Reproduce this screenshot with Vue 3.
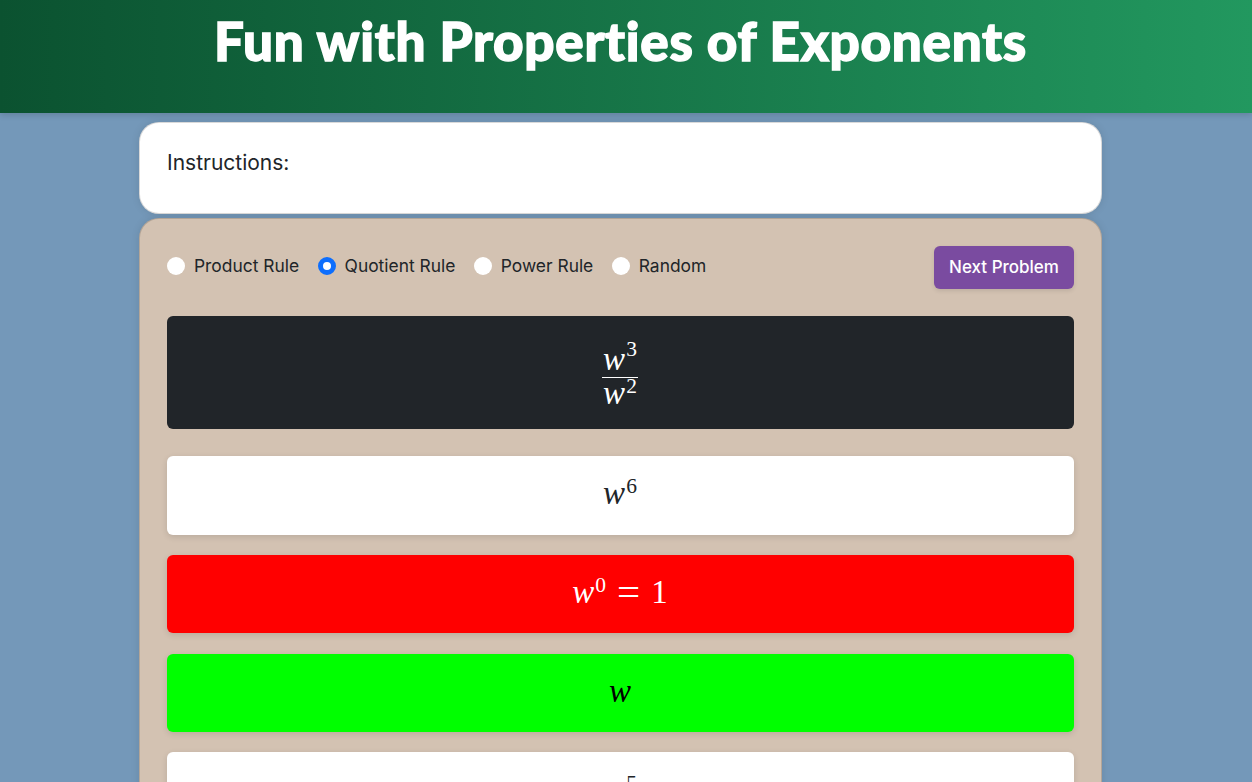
<script setup>
const rules = [
  { name: 'Product Rule', checked: false },
  { name: 'Quotient Rule', checked: true },
  { name: 'Power Rule', checked: false },
  { name: 'Random', checked: false },
]
</script>

<template>
  <div class="page">
    <header class="hero">
      <h1>Fun with Properties of Exponents</h1>
    </header>
    <main class="wrap">
      <section class="card instructions">Instructions:</section>
      <section class="card game">
        <div class="controls">
          <div class="radios">
            <label v-for="r in rules" :key="r.name" class="radio">
              <span class="dot" :class="{ on: r.checked }"></span>
              <span>{{ r.name }}</span>
            </label>
          </div>
          <button class="next">Next Problem</button>
        </div>

        <div class="problem">
          <span class="frac">
            <span class="num"><i>w</i><sup class="high">3</sup></span>
            <span class="den"><i>w</i><sup>2</sup></span>
          </span>
        </div>

        <div class="answer white first"><span class="math"><i>w</i><sup>6</sup></span></div>
        <div class="answer red"><span class="math"><i>w</i><sup>0</sup><span class="eq">=</span>1</span></div>
        <div class="answer green"><span class="math"><i>w</i></span></div>
        <div class="answer white"><span class="math"><i>w</i><sup>5</sup></span></div>
      </section>
    </main>
  </div>
</template>

<style>
html, body { margin: 0; background: #7498b9; overflow: hidden; }
</style>

<style scoped>
.page {
  height: 782px;
  overflow: hidden;
  background: #7498b9;
  font-family: "Inter", "Liberation Sans", sans-serif;
  color: #212529;
}
.hero {
  height: 113px;
  box-sizing: border-box;
  padding-right: 11px;
  background: linear-gradient(90deg, #0b5230, #22985f);
  box-shadow: 0 2px 6px rgba(0, 0, 0, 0.15);
  text-align: center;
}
.hero h1 {
  margin: 0;
  padding-top: 9px;
  font-family: "Lato", sans-serif;
  font-weight: 900;
  font-size: 53px;
  line-height: 64px;
  letter-spacing: 0.7px;
  font-variant-ligatures: none;
  color: #fff;
  -webkit-text-stroke: 1.4px #fff;
}
.wrap {
  width: 963px;
  margin: 9px 0 0 139px;
  display: flex;
  flex-direction: column;
  gap: 5px;
}
.card {
  box-sizing: border-box;
  border: 1px solid rgba(0, 0, 0, 0.15);
  border-radius: 20px;
  padding: 26px 27px;
  box-shadow: 0 0 8px rgba(0, 0, 0, 0.1);
}
.instructions {
  height: 92px;
  background: #fff;
  font-size: 21px;
  line-height: 27px;
}
.game {
  margin-top: -1px;
  padding-top: 27px;
  background: #d3c2b2;
  padding-bottom: 60px;
}
.controls {
  display: flex;
  justify-content: space-between;
  align-items: center;
  height: 43px;
}
.radios { display: flex; gap: 18.5px; margin-bottom: 4px; }
.radio {
  display: flex;
  align-items: center;
  gap: 9px;
  font-size: 17.4px;
}
.dot {
  width: 18px;
  height: 18px;
  border-radius: 50%;
  background: #fff;
  box-sizing: border-box;
}
.dot.on { border: 5px solid #0d6efd; }
.next {
  width: 140px;
  height: 43px;
  border: 0;
  padding: 0 0 2px;
  border-radius: 6px;
  background: #7a4ba0;
  color: #fff;
  font: 500 17px "Inter", "Liberation Sans", sans-serif;
  box-shadow: 0 2px 4px rgba(0, 0, 0, 0.1);
}
.problem {
  margin-top: 27px;
  height: 113px;
  border-radius: 6px;
  background: #212529;
  color: #fff;
  display: flex;
  align-items: center;
  justify-content: center;
}
.frac, .math {
  font-family: "Liberation Serif", serif;
  font-size: 33px;
}
.math { margin: -3px 1px 0 0; }
.frac {
  display: inline-flex;
  flex-direction: column;
  align-items: center;
  margin: 4px 1px 0 0;
}
.num { border-bottom: 1px solid #fff; line-height: 36px; padding: 0 1px; }
.den { line-height: 30px; }
sup { font-size: 21.5px; line-height: 0; vertical-align: 11px; margin-left: 1px; }
sup.high { vertical-align: 14px; }
.answer {
  height: 78.6px;
  margin-top: 20.2px;
  border-radius: 6px;
  display: flex;
  align-items: center;
  justify-content: center;
  box-shadow: 0 2px 6px rgba(0, 0, 0, 0.12);
}
.first { margin-top: 27px; }
.white { background: #fff; color: #212529; }
.red { background: #ff0000; color: #fff; }
.green { background: #00ff00; color: #000; }
.eq { margin: 0 11px; font-size: 41px; line-height: 0; vertical-align: -3px; }
</style>
